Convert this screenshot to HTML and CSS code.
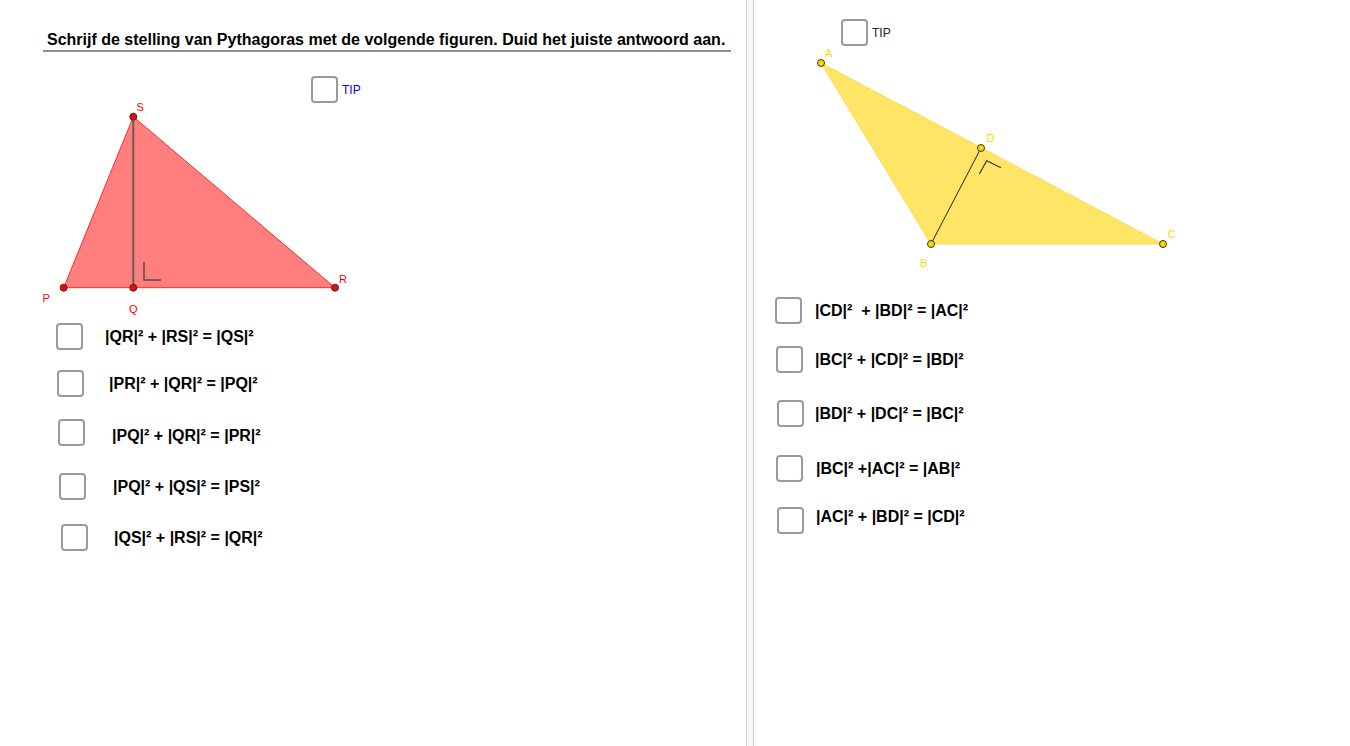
FILE: index.html
```html
<!DOCTYPE html>
<html lang="nl">
<head>
<meta charset="utf-8">
<title>Stelling van Pythagoras</title>
<link rel="stylesheet" href="styles.css">
</head>
<body>
<div class="app">
  <section class="view view-left">
    <svg class="canvas" width="746" height="746" viewBox="0 0 746 746" aria-hidden="false">
      <polygon class="tri-red" points="63.7,287.7 335,287.7 133.3,116.7"/>
      <line class="alt-red" x1="133.3" y1="116.7" x2="133.3" y2="287.7"/>
      <polyline class="ra-red" points="144,262 144,280 161,280"/>
      <circle class="pt-red" cx="133.3" cy="116.7" r="3.5"/>
      <circle class="pt-red" cx="63.7" cy="287.7" r="3.5"/>
      <circle class="pt-red" cx="133.3" cy="287.7" r="3.5"/>
      <circle class="pt-red" cx="335" cy="287.7" r="3.5"/>
      <text class="lbl-red" x="136.5" y="111">S</text>
      <text class="lbl-red" x="42.5" y="302">P</text>
      <text class="lbl-red" x="129" y="313">Q</text>
      <text class="lbl-red" x="339" y="283">R</text>
    </svg>
    <h1 class="title">Schrijf de stelling van Pythagoras met de volgende figuren. Duid het juiste antwoord aan.</h1>

    <label class="tip tip-left"><span class="box"></span><span class="tip-text blue">TIP</span></label>

    <div class="opt l1"><span class="box"></span><span class="eq">|QR|² + |RS|² = |QS|²</span></div>
    <div class="opt l2"><span class="box"></span><span class="eq">|PR|² + |QR|² = |PQ|²</span></div>
    <div class="opt l3"><span class="box"></span><span class="eq down3">|PQ|² + |QR|² = |PR|²</span></div>
    <div class="opt l4"><span class="box"></span><span class="eq">|PQ|² + |QS|² = |PS|²</span></div>
    <div class="opt l5"><span class="box"></span><span class="eq">|QS|² + |RS|² = |QR|²</span></div>
  </section>

  <div class="divider"></div>

  <section class="view view-right">
    <svg class="canvas" width="596" height="746" viewBox="754 0 596 746">
      <polygon class="tri-yel" points="821,63 931,244 1163,244"/>
      <line class="seg-bd" x1="931" y1="244" x2="981" y2="148"/>
      <polyline class="ra-yel" points="979.3,174 986.7,160.7 1001,167.7"/>
      <circle class="pt-yel" cx="821" cy="63" r="3.5"/>
      <circle class="pt-yel" cx="981" cy="148" r="3.5"/>
      <circle class="pt-yel" cx="931" cy="244" r="3.5"/>
      <circle class="pt-yel" cx="1163" cy="244" r="3.5"/>
      <text class="lbl-yel" x="825" y="57">A</text>
      <text class="lbl-yel" x="986.5" y="142">D</text>
      <text class="lbl-yel" x="920" y="267">B</text>
      <text class="lbl-yel" x="1167.5" y="238">C</text>
    </svg>

    <label class="tip tip-right"><span class="box"></span><span class="tip-text">TIP</span></label>

    <div class="opt r1"><span class="box"></span><span class="eq">|CD|²&nbsp; + |BD|² = |AC|²</span></div>
    <div class="opt r2"><span class="box"></span><span class="eq">|BC|² + |CD|² = |BD|²</span></div>
    <div class="opt r3"><span class="box"></span><span class="eq">|BD|² + |DC|² = |BC|²</span></div>
    <div class="opt r4"><span class="box"></span><span class="eq">|BC|² +|AC|² = |AB|²</span></div>
    <div class="opt r5"><span class="box"></span><span class="eq up4">|AC|² + |BD|² = |CD|²</span></div>
  </section>
</div>
</body>
</html>
```

FILE: styles.css
```css
html, body {
  margin: 0;
  padding: 0;
  background: #ffffff;
  overflow: hidden;
}

body {
  font-family: "Liberation Sans", Arial, sans-serif;
  color: #000;
}

.app {
  display: flex;
  width: 1350px;
  height: 746px;
}

.view {
  position: relative;
  height: 746px;
  overflow: hidden;
  background: #fff;
}

.view-left {
  width: 746px;
  flex: none;
}

.view-right {
  flex: 1;
}

.divider {
  flex: none;
  width: 6px;
  height: 746px;
  background: #f6f6f6;
  border-left: 1px solid #cfcfcf;
  border-right: 1px solid #cfcfcf;
}

.canvas {
  position: absolute;
  left: 0;
  top: 0;
  display: block;
}

/* title */
.title {
  position: relative;
  margin: 31px 0 0 43px;
  width: 684px;
  padding: 0 0 1px 4px;
  font-size: 16px;
  line-height: 18px;
  font-weight: bold;
  border-bottom: 2px solid #8f8f8f;
  white-space: nowrap;
}

/* geometry */
.tri-red {
  fill: #ff7f7f;
  stroke: #ff2a2a;
  stroke-width: 1;
}

.alt-red {
  stroke: #6e5a5a;
  stroke-width: 2;
}

.ra-red {
  fill: none;
  stroke: #5e4c4c;
  stroke-width: 1.5;
}

.pt-red {
  fill: #ff0000;
  stroke: #333;
  stroke-width: 1;
}

.lbl-red {
  fill: #ff0000;
  font-family: "Liberation Sans", Arial, sans-serif;
  font-size: 11px;
}

.tri-yel {
  fill: #ffe566;
  stroke: #ffd94a;
  stroke-width: 1;
}

.seg-bd {
  stroke: #222;
  stroke-width: 1;
}

.ra-yel {
  fill: none;
  stroke: #333;
  stroke-width: 1.2;
}

.pt-yel {
  fill: #ffd700;
  stroke: #333;
  stroke-width: 1;
}

.lbl-yel {
  fill: #ffd700;
  font-family: "Liberation Sans", Arial, sans-serif;
  font-size: 11px;
}

/* checkboxes */
.box {
  flex: none;
  display: block;
  width: 23px;
  height: 23px;
  border: 2px solid #9a9a9a;
  border-radius: 4px;
  background: #fff;
}

.tip {
  position: absolute;
  display: flex;
  align-items: center;
  gap: 4px;
}

.tip-text {
  font-size: 12px;
  color: #222;
}

.tip-text.blue {
  color: #0000ff;
}

.tip-left {
  left: 311px;
  top: 76px;
}

.tip-right {
  left: 87px;
  top: 19px;
}

.opt {
  position: absolute;
  display: flex;
  align-items: center;
}

.eq {
  font-size: 16px;
  font-weight: bold;
  white-space: nowrap;
}

.up4 { margin-bottom: 8px; }
.down3 { margin-top: 6px; }

.l1 { left: 56px; top: 323px; gap: 22px; }
.l2 { left: 57px; top: 370px; gap: 25px; }
.l3 { left: 58px; top: 419px; gap: 27px; }
.l4 { left: 59px; top: 473px; gap: 27px; }
.l5 { left: 61px; top: 524px; gap: 26px; }

.r1 { left: 21px; top: 297px; gap: 13px; }
.r2 { left: 22px; top: 346px; gap: 12px; }
.r3 { left: 23px; top: 400px; gap: 11px; }
.r4 { left: 22px; top: 455px; gap: 13px; }
.r5 { left: 23px; top: 507px; gap: 12px; }
```
